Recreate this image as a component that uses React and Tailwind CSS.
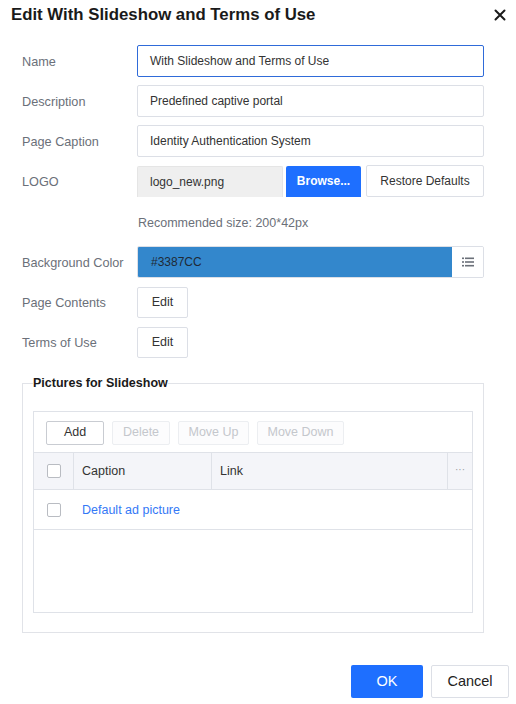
import React from 'react';

const labelCls = "w-[115px] shrink-0 text-[12.7px] text-[#6b7079] pt-[3px]";

function Row({ label, children, className = "" }) {
  return (
    <div className={`flex items-center h-[32px] pl-[22px] ${className}`}>
      <div className={labelCls}>{label}</div>
      {children}
    </div>
  );
}

function Checkbox() {
  return <div className="w-[14px] h-[14px] rounded-[2px] border border-[#b9bcc2] bg-white" />;
}

export default function App() {
  return (
    <div className="w-[516px] h-[704px] bg-white relative text-[#222] overflow-hidden" style={{ fontFamily: '"Liberation Sans", Arial, sans-serif' }}>
      <div className="flex items-center justify-between pl-[11px] pr-[10px] pt-[3px] h-[26px]">
        <h1 className="text-[16.8px] font-bold text-[#1a1a1a]">Edit With Slideshow and Terms of Use</h1>
        <svg width="12" height="12" viewBox="0 0 12 12">
          <path d="M1.5 1.5 L10.5 10.5 M10.5 1.5 L1.5 10.5" stroke="#1a1a1a" strokeWidth="2" strokeLinecap="round" />
        </svg>
      </div>

      <div className="mt-[19px] flex flex-col gap-[8px]">
        <Row label="Name">
          <div className="w-[347px] h-[32px] border border-[#2f6bd9] rounded-[2px] flex items-center px-[12px] text-[12px] text-[#333]">With Slideshow and Terms of Use</div>
        </Row>
        <Row label="Description">
          <div className="w-[347px] h-[32px] border border-[#dcdfe6] rounded-[2px] flex items-center px-[12px] text-[12px] text-[#333]">Predefined captive portal</div>
        </Row>
        <Row label="Page Caption">
          <div className="w-[347px] h-[32px] border border-[#dcdfe6] rounded-[2px] flex items-center px-[12px] text-[12px] text-[#333]">Identity Authentication System</div>
        </Row>
        <Row label="LOGO">
          <div className="flex items-center h-[32px]">
            <div className="w-[146px] h-[31px] bg-[#efefef] border border-[#e5e5e5] border-b-0 rounded-t-[2px] flex items-center px-[12px] text-[12px] text-[#333]">logo_new.png</div>
            <button className="ml-[3px] w-[75px] h-[31px] bg-[#1e6fff] rounded-t-[2px] text-white text-[12px] font-bold">Browse...</button>
            <button className="ml-[5px] w-[118px] h-[32px] border border-[#dcdfe6] rounded-[2px] text-[12px] text-[#333]">Restore Defaults</button>
          </div>
        </Row>
      </div>
      <div className="pl-[138px] mt-[18px] text-[12.5px] text-[#6b7079] h-[16px] leading-[16px]">Recommended size: 200*42px</div>

      <div className="mt-[15px] flex flex-col gap-[8px]">
        <Row label="Background Color">
          <div className="w-[347px] h-[32px] flex border border-[#dcdfe6] rounded-[2px] overflow-hidden">
            <div className="flex-1 bg-[#3387CC] flex items-center px-[13px] text-[12px] text-[#1f2a36]">#3387CC</div>
            <div className="w-[31px] flex items-center justify-center bg-white">
              <svg width="12" height="10" viewBox="0 0 12 10">
                <rect x="0" y="0.5" width="2" height="1.6" fill="#6b7079" />
                <rect x="3" y="0.5" width="9" height="1.6" fill="#6b7079" />
                <rect x="0" y="4.2" width="2" height="1.6" fill="#6b7079" />
                <rect x="3" y="4.2" width="9" height="1.6" fill="#6b7079" />
                <rect x="0" y="7.9" width="2" height="1.6" fill="#6b7079" />
                <rect x="3" y="7.9" width="9" height="1.6" fill="#6b7079" />
              </svg>
            </div>
          </div>
        </Row>
        <Row label="Page Contents">
          <button className="w-[51px] h-[31px] border border-[#dcdfe6] rounded-[2px] text-[12.5px] text-[#333] bg-white">Edit</button>
        </Row>
        <Row label="Terms of Use">
          <button className="w-[51px] h-[31px] border border-[#dcdfe6] rounded-[2px] text-[12.5px] text-[#333] bg-white">Edit</button>
        </Row>
      </div>

      <fieldset className="mt-[17px] ml-[22px] w-[462px] h-[258px] border border-[#e1e3e8] px-[10px] pb-[19px]">
        <legend className="text-[12.5px] font-bold text-[#1a1a1a] px-0 leading-[16px]">Pictures for Slideshow</legend>
        <div className="mt-[20px] border border-[#dfe2e8] h-[202px] flex flex-col">
          <div className="h-[40px] flex items-center gap-[8px] pl-[12px] pt-[1px]">
            <button className="w-[58px] h-[24px] border border-[#c9ccd2] rounded-[2px] text-[12.5px] text-[#333] bg-white">Add</button>
            <button className="w-[58px] h-[24px] border border-[#eceef1] rounded-[2px] text-[12.5px] text-[#c4c7cc] bg-[#fcfcfd]">Delete</button>
            <button className="w-[71px] h-[24px] border border-[#eceef1] rounded-[2px] text-[12.5px] text-[#c4c7cc] bg-[#fcfcfd]">Move Up</button>
            <button className="w-[87px] h-[24px] border border-[#eceef1] rounded-[2px] text-[12.5px] text-[#c4c7cc] bg-[#fcfcfd]">Move Down</button>
          </div>
          <div className="h-[38px] flex bg-[#f4f5f9] border-y border-[#dfe2e8] text-[12.5px] text-[#333]">
            <div className="w-[40px] border-r border-[#dfe2e8] flex items-center justify-center"><Checkbox /></div>
            <div className="w-[138px] border-r border-[#dfe2e8] flex items-center pl-[8px]">Caption</div>
            <div className="flex-1 border-r border-[#dfe2e8] flex items-center pl-[8px]">Link</div>
            <div className="w-[24px] flex items-center justify-center text-[#9a9da3] text-[10px] leading-none pb-[2px]">···</div>
          </div>
          <div className="h-[40px] flex items-center border-b border-[#dfe2e8] text-[12.5px]">
            <div className="w-[40px] flex items-center justify-center"><Checkbox /></div>
            <div className="pl-[8px] pt-[1px] text-[#3478f6]">Default ad picture</div>
          </div>
          <div className="flex-1" />
        </div>
      </fieldset>

      <div className="absolute right-[7px] bottom-[6px] flex gap-[8px]">
        <button className="w-[72px] h-[33px] bg-[#1e6fff] rounded-[2px] text-white text-[14.5px]">OK</button>
        <button className="w-[78px] h-[33px] border border-[#dcdfe6] rounded-[2px] text-[14.5px] text-[#222] bg-white">Cancel</button>
      </div>
    </div>
  );
}
